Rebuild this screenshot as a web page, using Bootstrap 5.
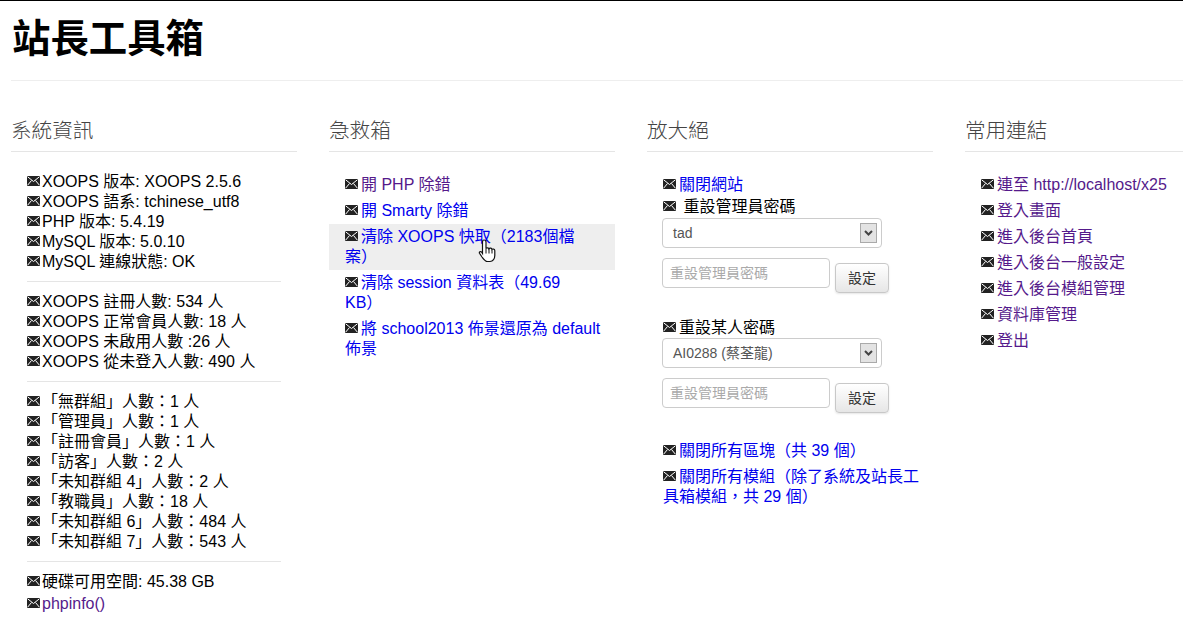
<!DOCTYPE html>
<html lang="zh-Hant"><head><meta charset="utf-8">
<link href="https://cdn.jsdelivr.net/npm/bootstrap@5.3.0/dist/css/bootstrap.min.css" rel="stylesheet">
<style>
html,body{overflow:hidden;height:625px}
body{margin:0;border-top:1px solid #000;font:16px/20px "Liberation Sans","Noto Sans CJK TC",sans-serif;color:#000;background:#fff;text-spacing-trim:space-all}
.site-wrap{padding-left:11px}
.site-title{font-size:38.4px;line-height:46px;font-weight:700;margin:15px 0 18px 1px;color:#000}
.title-rule{border:0;border-top:1px solid #eee;opacity:1;margin:0 0 27px}
.col-box{flex:0 0 286px;width:286px}
.col-last{flex:1 1 0;width:auto;min-width:0}
.col-head{font-size:20.6px;line-height:26px;font-weight:300;color:#444;margin:10px 0 0;padding:0 0 7px 0;border-bottom:1px solid #e5e5e5;height:34px}
.info-list{padding:20px 16px 0;margin:0;list-style:none}
.info-list .mail{margin-right:2px}
.info-rule{border:0;border-top:1px solid #e5e5e5;opacity:1;margin:9px 0 10px}
.link-list{padding:20px 0 0;margin:0;list-style:none}
.link-list li{padding:3px 15px 3px 16px}
.link-list li.roomy{padding-right:12px}
.link-wide li{padding-right:13.5px}
.link-list li.hovered{background:#eee}
.tight li{padding:1px 16px 1px}
.mail{display:inline-block;width:13px;height:10px;vertical-align:1px;margin-right:3px}
a.fresh{color:#0000ee;text-decoration:none}
a.seen{color:#551a8b;text-decoration:none}
.tool-form{padding:0 15px;margin:0}
.fake-select{width:220px;height:30px;font-size:14px;line-height:18px;color:#555;border:1px solid #ccc;border-radius:4px;padding:0 4px 0 10px;display:flex;align-items:center;justify-content:space-between;margin:0 0 10px;background:#fff}
.fake-arrow{width:17px;height:20px;background:#e3e3e3;border:1px solid #aaa;display:flex;align-items:center;justify-content:center}
.pw-input{width:168px;height:30px;font-size:14px;line-height:18px;color:#aaa;border:1px solid #ccc;border-radius:4px;padding:0 7px;display:flex;align-items:center}
.pw-row{display:flex;gap:5px;align-items:flex-start}
.pw-btn{width:54px;height:30px;margin-top:5px;font-size:14px;line-height:20px;padding:0;color:#333;border:1px solid #c8c8c8;border-radius:4px;background:linear-gradient(#fff,#e6e6e6);box-shadow:0 1px 2px rgba(0,0,0,.1)}
.person-label{margin:25px 0 0 1px}
.hand{position:absolute;left:478px;top:238px;width:20px;height:25px;pointer-events:none}
</style></head>
<body>
<svg width="0" height="0" class="position-absolute"><symbol id="env" viewBox="0 0 13 10"><rect width="13" height="10" fill="#222"/><path d="M0.500 0.700 6.500 5.500 12.500 0.700M0.500 9.300 4.500 4.500M12.500 9.300 8.500 4.500" stroke="#fff" stroke-width="1" fill="none"/></symbol></svg>
<div class="site-wrap">
<h1 class="site-title">站長工具箱</h1>
<hr class="title-rule">
<div class="d-flex" style="gap:32px">
 <section class="col-box">
  <h3 class="col-head">系統資訊</h3>
  <ul class="info-list">
   <li><svg class="mail"><use href="#env"/></svg>XOOPS 版本: XOOPS 2.5.6</li>
   <li><svg class="mail"><use href="#env"/></svg>XOOPS 語系: tchinese_utf8</li>
   <li><svg class="mail"><use href="#env"/></svg>PHP 版本: 5.4.19</li>
   <li><svg class="mail"><use href="#env"/></svg>MySQL 版本: 5.0.10</li>
   <li><svg class="mail"><use href="#env"/></svg>MySQL 連線狀態: OK</li>
   <li><hr class="info-rule"></li>
   <li><svg class="mail"><use href="#env"/></svg>XOOPS 註冊人數: 534 人</li>
   <li><svg class="mail"><use href="#env"/></svg>XOOPS 正常會員人數: 18 人</li>
   <li><svg class="mail"><use href="#env"/></svg>XOOPS 未啟用人數 :26 人</li>
   <li><svg class="mail"><use href="#env"/></svg>XOOPS 從未登入人數: 490 人</li>
   <li><hr class="info-rule"></li>
   <li><svg class="mail"><use href="#env"/></svg>「無群組」人數：1 人</li>
   <li><svg class="mail"><use href="#env"/></svg>「管理員」人數：1 人</li>
   <li><svg class="mail"><use href="#env"/></svg>「註冊會員」人數：1 人</li>
   <li><svg class="mail"><use href="#env"/></svg>「訪客」人數：2 人</li>
   <li><svg class="mail"><use href="#env"/></svg>「未知群組 4」人數：2 人</li>
   <li><svg class="mail"><use href="#env"/></svg>「教職員」人數：18 人</li>
   <li><svg class="mail"><use href="#env"/></svg>「未知群組 6」人數：484 人</li>
   <li><svg class="mail"><use href="#env"/></svg>「未知群組 7」人數：543 人</li>
   <li><hr class="info-rule"></li>
   <li><svg class="mail"><use href="#env"/></svg>硬碟可用空間: 45.38 GB</li>
   <li style="padding-top:2px"><svg class="mail"><use href="#env"/></svg><a class="seen" href="#">phpinfo()</a></li>
  </ul>
 </section>
 <section class="col-box">
  <h3 class="col-head">急救箱</h3>
  <ul class="link-list">
   <li><svg class="mail"><use href="#env"/></svg><a class="seen" href="#">開 PHP 除錯</a></li>
   <li><svg class="mail"><use href="#env"/></svg><a class="fresh" href="#">開 Smarty 除錯</a></li>
   <li class="hovered"><svg class="mail"><use href="#env"/></svg><a class="fresh" href="#">清除 XOOPS 快取（2183個檔案）</a></li>
   <li><svg class="mail"><use href="#env"/></svg><a class="fresh" href="#">清除 session 資料表（49.69 KB）</a></li>
   <li class="roomy"><svg class="mail"><use href="#env"/></svg><a class="fresh" href="#">將 school2013 佈景還原為 default 佈景</a></li>
  </ul>
 </section>
 <section class="col-box">
  <h3 class="col-head">放大絕</h3>
  <ul class="link-list tight pb-0">
   <li style="padding-top:3px"><svg class="mail"><use href="#env"/></svg><a class="fresh" href="#">關閉網站</a></li>
   <li><svg class="mail"><use href="#env"/></svg> 重設管理員密碼</li>
  </ul>
  <form class="tool-form">
   <div class="fake-select"><span>tad</span><span class="fake-arrow"><svg width="9" height="6" viewBox="0 0 9 6"><path d="M1 1 4.500 4.500 8 1" stroke="#444" stroke-width="2" fill="none"/></svg></span></div>
   <div class="pw-row"><div class="pw-input">重設管理員密碼</div><button type="button" class="pw-btn">設定</button></div>
   <div class="person-label"><svg class="mail"><use href="#env"/></svg>重設某人密碼</div>
   <div class="fake-select"><span>AI0288 (蔡荃龍)</span><span class="fake-arrow"><svg width="9" height="6" viewBox="0 0 9 6"><path d="M1 1 4.500 4.500 8 1" stroke="#444" stroke-width="2" fill="none"/></svg></span></div>
   <div class="pw-row"><div class="pw-input">重設管理員密碼</div><button type="button" class="pw-btn">設定</button></div>
  </form>
  <ul class="link-list link-wide" style="padding-top:25px">
   <li><svg class="mail"><use href="#env"/></svg><a class="fresh" href="#">關閉所有區塊（共 39 個）</a></li>
   <li><svg class="mail"><use href="#env"/></svg><a class="fresh" href="#">關閉所有模組（除了系統及站長工具箱模組，共 29 個）</a></li>
  </ul>
 </section>
 <section class="col-box col-last">
  <h3 class="col-head">常用連結</h3>
  <ul class="link-list">
   <li><svg class="mail"><use href="#env"/></svg><a class="seen" href="#">連至 http://localhost/x25</a></li>
   <li><svg class="mail"><use href="#env"/></svg><a class="seen" href="#">登入畫面</a></li>
   <li><svg class="mail"><use href="#env"/></svg><a class="seen" href="#">進入後台首頁</a></li>
   <li><svg class="mail"><use href="#env"/></svg><a class="seen" href="#">進入後台一般設定</a></li>
   <li><svg class="mail"><use href="#env"/></svg><a class="seen" href="#">進入後台模組管理</a></li>
   <li><svg class="mail"><use href="#env"/></svg><a class="seen" href="#">資料庫管理</a></li>
   <li><svg class="mail"><use href="#env"/></svg><a class="seen" href="#">登出</a></li>
  </ul>
 </section>
</div>
</div>
<svg class="hand" viewBox="0 0 20 24"><path d="M6 1.500c1.200 0 2 .8 2 2V10c.5-1 2.800-1 3 .3.600-1 2.800-.8 3 .6.700-.7 2.800-.4 2.800 1.300V17c0 3-1.800 6-4.800 6H9.500C7 23 5.800 21 4 18.500L1.500 14.800c-.6-1.300 1-2.300 2-1.300L4.500 15V3.500c0-1.200.5-2 1.500-2z" fill="#fff" stroke="#111" stroke-width="1.200"/><path d="M8 10v5M11 10v5M14 11v4" stroke="#111" stroke-width="1"/></svg>
</body></html>
